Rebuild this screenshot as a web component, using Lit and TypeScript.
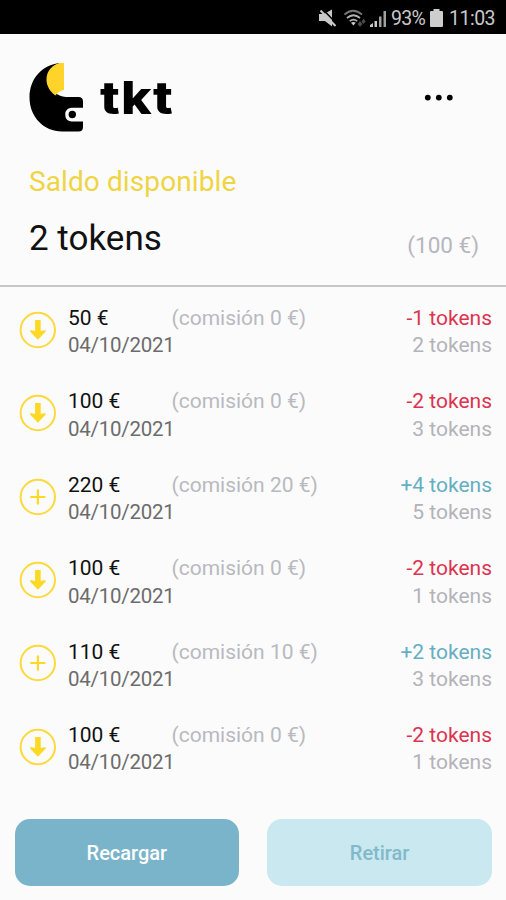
import { LitElement, html, css, svg } from "lit";
import { customElement, property } from "lit/decorators.js";

interface Movement {
  kind: "down" | "plus";
  amount: string;
  fee: string;
  date: string;
  delta: string;
  balance: string;
}

const DATE = "04/10/2021";
const MOVEMENTS: Movement[] = [
  { kind: "down", amount: "50 €", fee: "(comisión 0 €)", date: DATE, delta: "-1 tokens", balance: "2 tokens" },
  { kind: "down", amount: "100 €", fee: "(comisión 0 €)", date: DATE, delta: "-2 tokens", balance: "3 tokens" },
  { kind: "plus", amount: "220 €", fee: "(comisión 20 €)", date: DATE, delta: "+4 tokens", balance: "5 tokens" },
  { kind: "down", amount: "100 €", fee: "(comisión 0 €)", date: DATE, delta: "-2 tokens", balance: "1 tokens" },
  { kind: "plus", amount: "110 €", fee: "(comisión 10 €)", date: DATE, delta: "+2 tokens", balance: "3 tokens" },
  { kind: "down", amount: "100 €", fee: "(comisión 0 €)", date: DATE, delta: "-2 tokens", balance: "1 tokens" },
];

@customElement("status-bar")
class StatusBar extends LitElement {
  static styles = css`
    :host {
      display: flex;
      height: 34px;
      box-sizing: border-box;
      padding: 3px 11px 0 0;
      align-items: center;
      justify-content: flex-end;
      background: #000;
      color: #c9c9c9;
      font-size: 19.5px;
      line-height: 32px;
    }
    svg { display: block; }
    .label { display: block; white-space: nowrap; }
    .pct { width: 35px; letter-spacing: -0.7px; margin-left: 5px; }
    .time { width: 46px; letter-spacing: -0.5px; margin-left: 6px; }
    .battery { margin: -2px 0 0 4px; }
    .signals { margin-top: -2px; }
  `;
  render() {
    return html`
      <svg class="signals" width="68" height="32" viewBox="318 1 68 32">
        <path fill="#c9c9c9" d="M319 13h5l8-4.500v17l-7-5.500h-6z" />
        <path fill="none" stroke="#000" stroke-width="1.600" d="M322.500 8l14 14.500" />
        <path fill="none" stroke="#c9c9c9" stroke-width="2" d="M320.500 9.500l15 15.500" />
        <g fill="none" stroke="#b4b4b4" stroke-width="1.700">
          <path d="M344.500 13.500q8.500-7.500 17.500 0" stroke="#777" />
          <path d="M347 17q6.500-5.500 13 0" />
          <path d="M349.800 20.200q3.700-3 7.400 0" />
        </g>
        <path fill="#c9c9c9" d="M351 21.800q2.400-1.500 4.800 0l-2.400 2.700z" />
        <path fill="#4c4c4c" d="M357.500 23l2.500-3 2.500 3-2.500 3zM361.500 20.500l2-3 2 3-2 2.500z" />
        <g fill="#c9c9c9">
          <path d="M370 26v-2l3-2v4z" />
          <path d="M374.500 20h2.500v6h-2.500z" />
          <path d="M379 15.500h2.500v10.500h-2.500z" opacity=".8" />
          <path d="M383.500 10h2.500v16h-2.500z" opacity=".8" />
        </g>
      </svg>
      <span class="label pct">93%</span>
      <svg class="battery" width="13" height="20" viewBox="0 0 13 20">
        <path fill="#cdcdcd" d="M3.500 1h6v2H12a1 1 0 0 1 1 1v14a1 1 0 0 1-1 1H1a1 1 0 0 1-1-1V4a1 1 0 0 1 1-1h2.500z" />
      </svg>
      <span class="label time">11:03</span>
    `;
  }
}

@customElement("brand-header")
class BrandHeader extends LitElement {
  static styles = css`
    :host {
      display: flex;
      height: 124px;
      box-sizing: border-box;
      padding: 27px 53px 0 29px;
      align-items: flex-start;
    }
    svg { display: block; }
    .name {
      margin: 7px auto 0 16px;
      font-family: Inter, "Open Sans", sans-serif;
      font-size: 45px;
      line-height: 60px;
      font-weight: 800;
      letter-spacing: 1px;
      color: #000;
      transform: scaleX(1.15);
      transform-origin: left center;
    }
    .more { margin-top: 33px; }
  `;
  render() {
    return html`
      <svg width="55" height="72" viewBox="29 61 55 72">
        <path fill="#000" d="M60 63C42 64.500 29.500 79 29.500 97.500C29.500 117 44 131.500 62 131.500H78.500Q83 131.500 83 127V121.500H71.500A6.200 6.200 0 0 1 65.300 115.300V114A6.200 6.200 0 0 1 71.500 107.800H83V101.500Q83 97 78.500 97H66C57 96.500 50 90 48 81C46.500 73 51 66.500 60 63Z" />
        <path fill="#ffd42a" d="M64 63H60.500C52 64.500 46.500 71 46.500 79.500C46.500 86 50 91.500 55.500 95.500C57.500 92.500 60.500 90.500 64 90Z" />
        <circle cx="72.300" cy="114.500" r="3.700" fill="#000" />
      </svg>
      <span class="name">tkt</span>
      <svg class="more" width="29" height="8" viewBox="0 0 29 8">
        <circle cx="3.800" cy="3.600" r="2.900" /><circle cx="14.800" cy="3.600" r="2.900" /><circle cx="25.800" cy="3.600" r="2.900" />
      </svg>
    `;
  }
}

@customElement("movement-row")
class MovementRow extends LitElement {
  @property({ attribute: false }) item!: Movement;
  static styles = css`
    :host {
      display: grid;
      grid-template-columns: 49px 103.500px 1fr auto;
      grid-template-rows: 27.400px 27.400px;
      height: 83.400px;
      padding: 0 14px 0 19px;
      box-sizing: border-box;
      font-size: 21px;
      line-height: 27.400px;
      white-space: nowrap;
    }
    .icon { grid-row: 1 / 3; align-self: center; display: block; margin-top: -5px; }
    .amount { color: #111; }
    .fee { color: #b9b9c0; }
    .date { grid-column: 2; grid-row: 2; color: #6c6c6c; font-size: 20.500px; letter-spacing: -0.250px; }
    .delta { grid-column: 4; grid-row: 1; text-align: right; color: #dc3450; }
    .delta.plus { color: #66aec2; }
    .balance { grid-column: 4; grid-row: 2; text-align: right; color: #b3b3b9; }
  `;
  render() {
    const { kind, amount, fee, date, delta, balance } = this.item;
    const glyph =
      kind === "down"
        ? svg`<path fill="#fdd926" d="M16.100 9h5.600v11l4.800-1v1.700L18.900 28.700l-7.600-8V19l4.800 1z" />`
        : svg`<path fill="none" stroke="#fdd926" stroke-width="2.200" d="M11.300 19h15.200M18.900 11.400v15.200" />`;
    return html`
      <svg class="icon" width="38" height="38" viewBox="0 0 38 38">
        <circle cx="18.800" cy="19" r="17.200" fill="none" stroke="#fdd93c" stroke-width="2" />
        ${glyph}
      </svg>
      <span class="amount">${amount}</span>
      <span class="fee">${fee}</span>
      <span class="date">${date}</span>
      <span class="delta ${kind}">${delta}</span>
      <span class="balance">${balance}</span>
    `;
  }
}

@customElement("app-root")
class AppRoot extends LitElement {
  static styles = css`
    :host {
      display: flex;
      flex-direction: column;
      height: 900px;
      box-sizing: border-box;
      overflow: hidden;
      background: #fbfbfb;
      font-family: Roboto, "Liberation Sans", sans-serif;
    }
    .summary {
      height: 129px;
      box-sizing: border-box;
      padding: 6px 27px 0 29px;
      border-bottom: 2px solid #c6c6c8;
    }
    .title { font-size: 28px; line-height: 36px; color: #efd544; letter-spacing: 0.100px; }
    .balance { display: flex; justify-content: space-between; align-items: baseline; margin-top: 16px; }
    .tokens { font-size: 35px; line-height: 46px; color: #111; }
    .euros { font-size: 22.500px; color: #b6b6bd; position: relative; top: 3px; }
    .list { flex: 1; padding-top: 18px; }
    .actions { display: flex; gap: 28px; padding: 0 14px 14px 14.500px; }
    .button {
      flex: 1;
      height: 67px;
      border: 0;
      border-radius: 15px;
      padding: 2px 0 0;
      font: 500 20px/65px Roboto, "Liberation Sans", sans-serif;
      background: #7ab4ca;
      color: #fff;
    }
    .button.light { background: #c9e8ef; color: #82b9ca; }
  `;
  render() {
    return html`
      <status-bar></status-bar>
      <brand-header></brand-header>
      <section class="summary">
        <div class="title">Saldo disponible</div>
        <div class="balance"><span class="tokens">2 tokens</span><span class="euros">(100 €)</span></div>
      </section>
      <main class="list">${MOVEMENTS.map((m) => html`<movement-row .item=${m}></movement-row>`)}</main>
      <footer class="actions">
        <button class="button">Recargar</button>
        <button class="button light">Retirar</button>
      </footer>
    `;
  }
}
